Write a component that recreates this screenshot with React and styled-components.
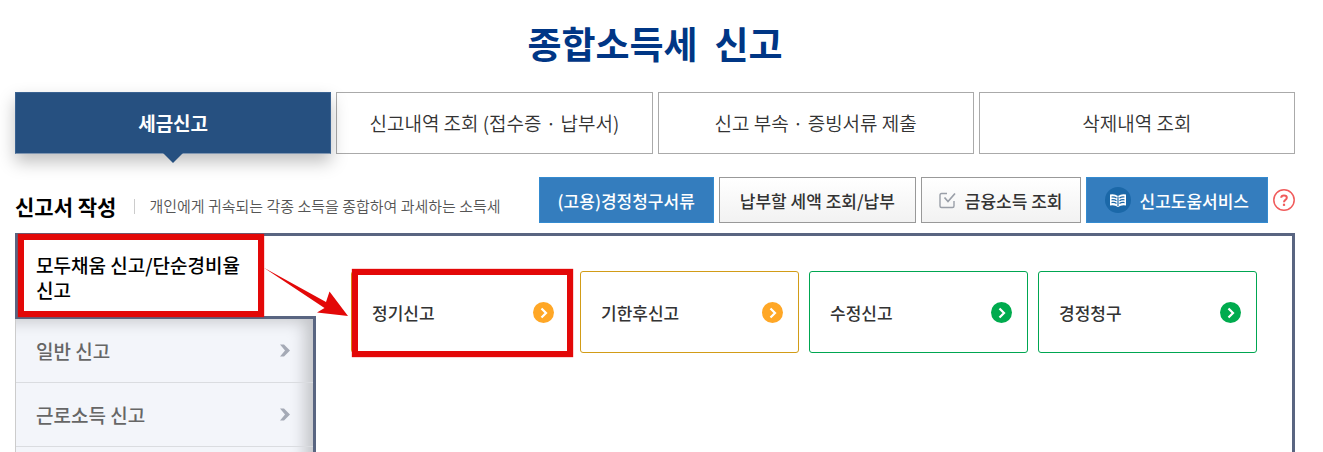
import React from 'react';
import styled, { createGlobalStyle } from 'styled-components'

const GlobalStyle = createGlobalStyle`
  * {
    box-sizing: border-box;
  }
  body {
    margin: 0;
    background: #fff;
    color: #333;
    font-family: "Noto Sans CJK KR", "Noto Sans", sans-serif;
  }
  button {
    font-family: inherit;
    cursor: pointer;
  }
  a {
    color: inherit;
    text-decoration: none;
  }
`
const Page = styled.div`
  display: flex;
  flex-direction: column;
  height: 100vh;
  overflow: hidden;
  padding: 0 28px 0 15px;
`
const Title = styled.h1`
  margin: 0;
  padding: 15px 0 21px;
  color: #003685;
  font-size: 37px;
  font-weight: 700;
  line-height: 56px;
  text-align: center;
  white-space: pre;
`
const TabBar = styled.nav`
  display: grid;
  grid-template-columns: repeat(4, 1fr);
  gap: 5px;
`
const Tab = styled.button`
  height: 62px;
  padding: 0 0 2px;
  border: 1px solid #aaa;
  background: #fff;
  color: #333;
  font-size: 19px;
  font-weight: 350;
`
const ActiveTab = styled(Tab)`
  position: relative;
  border-color: #3a6291 #3a6291 #8096b1;
  background: #265080;
  color: #fff;
  font-weight: 700;
  box-shadow: 0 8px 16px rgba(0, 0, 0, 0.25);

  &::after {
    content: '';
    position: absolute;
    top: 60px;
    left: 50%;
    margin-left: -10px;
    border: 10px solid transparent;
    border-top-color: #265080;
    border-bottom: 0;
  }
`
const SectionHead = styled.div`
  display: flex;
  align-items: center;
  justify-content: space-between;
  padding: 23px 0 10px;
`
const HeadText = styled.div`
  display: flex;
  align-items: center;
  padding-top: 12px;
`
const SectionTitle = styled.h2`
  margin: 0;
  color: #000;
  font-size: 21px;
  font-weight: 700;
  line-height: 30px;
`
const SectionDesc = styled.p`
  display: flex;
  align-items: center;
  margin: 0;
  color: #555;
  font-size: 15px;
  font-weight: 350;
  line-height: 24px;

  &::before {
    content: '';
    width: 1px;
    height: 15px;
    margin: 0 14px 0 18px;
    background: #ccc;
  }
`
const HeadButtons = styled.div`
  display: flex;
  align-items: center;
  gap: 5px;
`
const HeadButton = styled.button`
  display: flex;
  align-items: center;
  gap: 9px;
  height: 46px;
  padding: 0 ${props => props.$icon ? '17px' : '20px'};
  border: 1px solid #999;
  background: linear-gradient(#fff, #f2f2f2);
  color: #333;
  font-size: 17px;
  font-weight: 500;
  white-space: nowrap;
`
const BlueButton = styled(HeadButton)`
  padding: 0 18px;
  border-color: #348bd0;
  background: #347dbe;
  color: #fff;
`
const HelpButton = styled.button`
  display: flex;
  padding: 0;
  border: 0;
  background: none;
`
const Panel = styled.div`
  display: flex;
  flex: 1;
  border: solid #596581;
  border-width: 3px 3px 0 0;
`
const Side = styled.nav`
  display: flex;
  flex-direction: column;
  flex: 0 0 301px;
`
const CurrentItem = styled.a`
  position: relative;
  display: block;
  margin-top: -3px;
  padding: 19px 60px 14px 18px;
  border: solid #596581;
  border-width: 0 0 3px 3px;
  color: #000;
  font-size: 19px;
  font-weight: 500;
  line-height: 25px;
`
const SideList = styled.div`
  flex: 1;
  border-left: 1px solid #ccc;
  border-right: 3px solid #596581;
  background: #f3f5fa;
  box-shadow: inset -16px 10px 16px -8px rgba(0, 0, 0, 0.2);
`
const SideItem = styled.a`
  display: flex;
  align-items: center;
  justify-content: space-between;
  height: 64px;
  padding: 0 23px 1px 20px;
  border-bottom: 1px solid #dadce0;
  color: #666;
  font-size: 19px;
  font-weight: 500;
`
const Content = styled.main`
  flex: 1;
  padding: 35px;
`
const CardGrid = styled.div`
  display: grid;
  grid-template-columns: repeat(4, 1fr);
  gap: 10px;
`
const Card = styled.a`
  position: relative;
  display: flex;
  align-items: center;
  justify-content: space-between;
  height: 82px;
  padding: 0 15px 0 20px;
  border: 1px solid ${props => props.$color};
  border-radius: 3px;
  color: #333;
  font-size: 17px;
  font-weight: 500;
`
// red marks drawn over the page
const Mark = styled.span`
  position: absolute;
  border: 6px solid #e30808;
  box-shadow: 0 0 1px #e30808;
  pointer-events: none;
`
const MenuMark = styled(Mark)`
  top: 1px;
  left: 0;
  width: 246px;
  height: 83px;
`
const CardMark = styled(Mark)`
  top: -3px;
  right: -4px;
  bottom: -5px;
  left: 0;
`
const Arrow = styled.svg`
  position: absolute;
  top: 34px;
  left: 245px;
  z-index: 1;
  pointer-events: none;
`

const CheckIcon = () => (
  <svg width="17" height="17" viewBox="0 0 17 17" fill="none" stroke="#9a9fa8">
    <path d="M8 1.5H2.5Q1 1.5 1 3V14Q1 15.5 2.5 15.5H13.5Q15 15.5 15 14V9" strokeWidth="1.4" />
    <path d="M5.5 5.5L9 9.5L16 1.5" strokeWidth="1.7" />
  </svg>
)

const BookIcon = () => (
  <svg width="26" height="26" viewBox="0 0 26 26" fill="none">
    <circle cx="13" cy="13" r="13" fill="#1b68a8" />
    <path d="M5 7.5Q9.5 6.5 13 9Q16.5 6.5 21 7.5V18.5Q16.5 17.5 13 20Q9.5 17.5 5 18.5Z" fill="#fff" />
    <path d="M13 9.5V19M6.5 10Q9.5 9.5 11.5 11M6.5 12.8Q9.5 12.3 11.5 13.8M6.5 15.6Q9.5 15.1 11.5 16.6M19.5 10Q16.5 9.5 14.5 11M19.5 12.8Q16.5 12.3 14.5 13.8M19.5 15.6Q16.5 15.1 14.5 16.6" stroke="#1b68a8" strokeWidth="1.2" />
  </svg>
)

const HelpIcon = () => (
  <svg width="22" height="22" viewBox="0 0 22 22" fill="none" stroke="#f05b5b">
    <circle cx="11" cy="11" r="10.2" strokeWidth="1.5" />
    <path d="M8.2 8.8Q8.3 6.5 11 6.5Q13.8 6.5 13.8 8.8Q13.8 10 12.4 10.9Q11 11.8 11 13.3" strokeWidth="2" />
    <path d="M11 14.7V16.9" strokeWidth="2.2" />
  </svg>
)

const SideArrow = () => (
  <svg width="10" height="13" viewBox="0 0 10 13">
    <path d="M0 0.5H4L10 6.5L4 12.5H0L5 6.5Z" fill="#a5aab6" />
  </svg>
)

const CardIcon = ({ color }) => (
  <svg width="21" height="21" viewBox="0 0 21 21" fill="none">
    <circle cx="10.5" cy="10.5" r="10.5" fill={color} />
    <path d="M8.5 6.5L13 11L8.5 15.5" stroke="#fff" strokeWidth="2.2" />
  </svg>
)

const tabs = ['신고내역 조회 (접수증 · 납부서)', '신고 부속 · 증빙서류 제출', '삭제내역 조회']
const menu = ['일반 신고', '근로소득 신고']
const cards = [
  { name: '정기신고', border: '#d29c17', icon: '#ffa726', marked: true },
  { name: '기한후신고', border: '#d29c17', icon: '#ffa726' },
  { name: '수정신고', border: '#00a651', icon: '#00ab4e' },
  { name: '경정청구', border: '#00a651', icon: '#00ab4e' },
]

const App = () => {
  return (
    <Page>
      <GlobalStyle />
      <Title>종합소득세{'  '}신고</Title>
      <TabBar>
        <ActiveTab type="button">세금신고</ActiveTab>
        {tabs.map(tab => <Tab type="button" key={tab}>{tab}</Tab>)}
      </TabBar>
      <SectionHead>
        <HeadText>
          <SectionTitle>신고서 작성</SectionTitle>
          <SectionDesc>개인에게 귀속되는 각종 소득을 종합하여 과세하는 소득세</SectionDesc>
        </HeadText>
        <HeadButtons>
          <BlueButton type="button">(고용)경정청구서류</BlueButton>
          <HeadButton type="button">납부할 세액 조회/납부</HeadButton>
          <HeadButton type="button" $icon><CheckIcon />금융소득 조회</HeadButton>
          <BlueButton type="button"><BookIcon />신고도움서비스</BlueButton>
          <HelpButton type="button" aria-label="도움말"><HelpIcon /></HelpButton>
        </HeadButtons>
      </SectionHead>
      <Panel>
        <Side>
          <CurrentItem href="#simple">
            모두채움 신고/단순경비율 신고
            <MenuMark />
            <Arrow width="88" height="52" viewBox="0 0 88 52">
              <path d="M0.5 0.5L63 35L66.5 24.5L85 49L54 45.5L61.5 41Z" fill="#e30808" />
            </Arrow>
          </CurrentItem>
          <SideList>
            {menu.map(item => <SideItem href="#menu" key={item}>{item}<SideArrow /></SideItem>)}
          </SideList>
        </Side>
        <Content>
          <CardGrid>
            {cards.map(card => (
              <Card href="#card" key={card.name} $color={card.border}>
                {card.name}
                <CardIcon color={card.icon} />
                {card.marked && <CardMark />}
              </Card>
            ))}
          </CardGrid>
        </Content>
      </Panel>
    </Page>
  )
}

export default App;
